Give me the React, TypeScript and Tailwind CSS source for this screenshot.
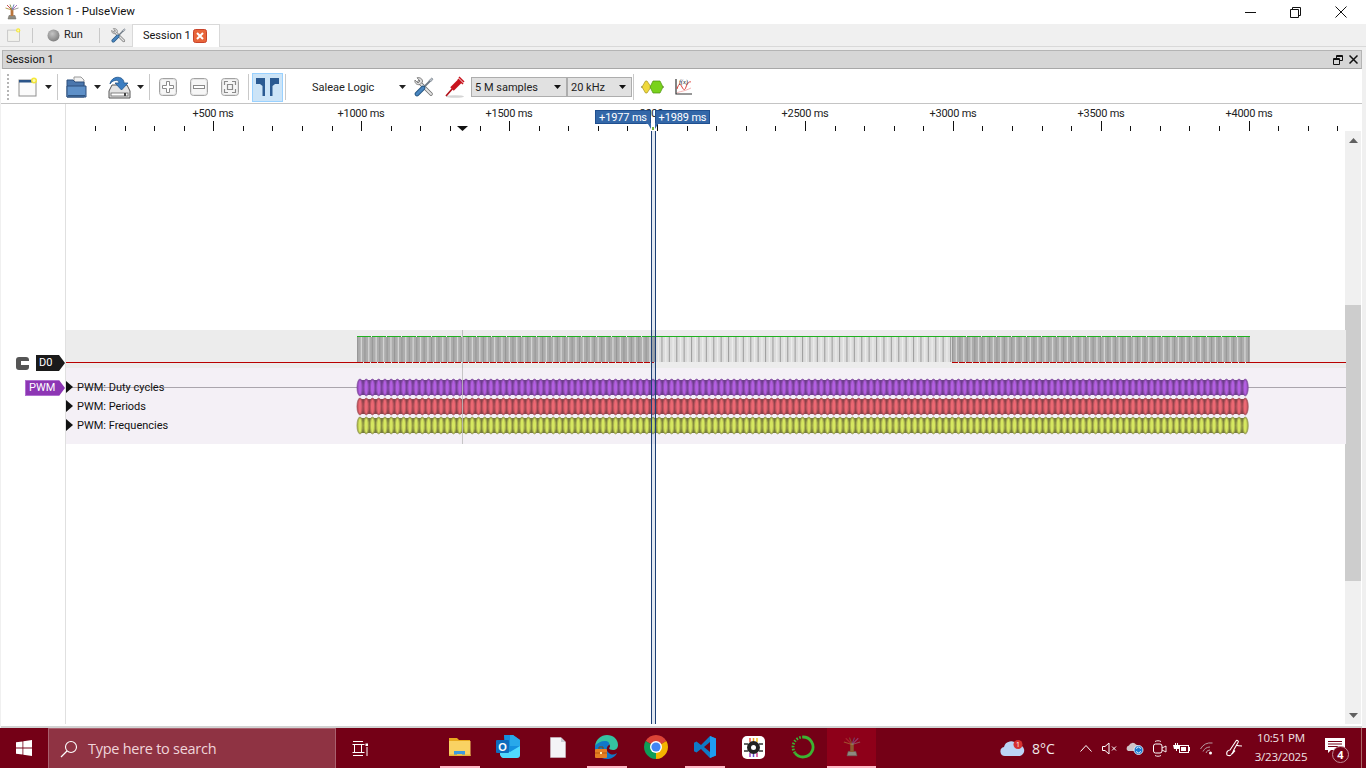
import React from "react";

const Caret = ({ c = "#222", w = 7 }: { c?: string; w?: number }) => (
  <svg width={w} height="4" viewBox="0 0 7 4" className="shrink-0"><path d="M0 0h7L3.5 4z" fill={c} /></svg>
);
const Sep = ({ h = "h-[26px]", ml = "ml-0" }: { h?: string; ml?: string }) => <div className={`w-px bg-[#c9c9c9] shrink-0 ${h} ${ml}`} />;

const Logo = ({ s = 16, dark = false }: { s?: number; dark?: boolean }) => (
  <svg width={s} height={s} viewBox="0 0 16 16" className="shrink-0">
    <path d="M5 11.5h6l1 3.5H4z" fill="#8d8a80" stroke="#66645c" strokeWidth=".5" />
    <rect x="6.6" y="5" width="2.8" height="7" fill={dark ? "#8a5a30" : "#b9743a"} />
    <g strokeWidth=".9" fill="none" opacity={dark ? 0.55 : 1}>
      <path d="M8 6L3 1" stroke="#c03a3a" /><path d="M8 6L6 .5" stroke="#7a8a40" /><path d="M8 6L10 .5" stroke="#5878b0" /><path d="M8 6l5-5" stroke="#a060b0" /><path d="M8 6L1.5 4" stroke="#b09040" /><path d="M8 6l6.5-2" stroke="#909090" />
    </g>
  </svg>
);
const Wrench = ({ s = 20 }: { s?: number }) => (
  <svg width={s} height={s} viewBox="0 0 20 20" className="shrink-0">
    <path d="M5 5l12 12" stroke="#6f6f6f" strokeWidth="3.600" strokeLinecap="round" />
    <path d="M5 5l12 12" stroke="#e4e4e4" strokeWidth="2" strokeLinecap="round" />
    <path d="M3 .8L6 4 4 6 1 3C.3 5.500 2.500 8.500 6 7.500L8.500 5C9 2 6 0 3 .8z" fill="#dcdcdc" stroke="#6f6f6f" strokeWidth=".8" />
    <path d="M9 11l7-7" stroke="#6f7a85" strokeWidth="1.800" />
    <path d="M15 3.500l2.800-2.500 1.200 1.200-2.500 2.800z" fill="#b8c0c8" stroke="#5f6a75" strokeWidth=".6" />
    <path d="M3 17l6-6" stroke="#23547f" strokeWidth="4.600" strokeLinecap="round" />
    <path d="M3 17l6-6" stroke="#4a86c0" strokeWidth="3" strokeLinecap="round" />
  </svg>
);
const SquareBtn = ({ kind }: { kind: "plus" | "minus" | "fit" }) => (
  <svg width="18" height="18" viewBox="0 0 18 18" className="shrink-0">
    <rect x=".5" y=".5" width="17" height="17" rx="3" fill="#ececec" stroke="#a2a2a2" />
    <rect x="1.500" y="1.500" width="15" height="15" rx="2" fill="#f6f6f6" stroke="#dcdcdc" strokeWidth=".6" />
    {kind === "plus" && <path d="M7.500 3.500h3v4h4v3h-4v4h-3v-4h-4v-3h4z" fill="#fff" stroke="#8a8a8a" />}
    {kind === "minus" && <rect x="3.500" y="7.500" width="11" height="3" fill="#fff" stroke="#8a8a8a" />}
    {kind === "fit" && <path d="M3.500 7V3.500H7M11 3.500h3.500V7M14.500 11v3.500H11M7 14.500H3.500V11M6.500 6.500h5v5h-5z" fill="none" stroke="#8a8a8a" strokeWidth="1.200" />}
  </svg>
);
const NewDoc = ({ s = 20, dim = false }: { s?: number; dim?: boolean }) => (
  <svg width={s} height={s} viewBox="0 0 20 20" className="shrink-0">
    <rect x="1" y="3" width="17" height="16" fill={dim ? "#f2f2ee" : "#fbfbfb"} stroke={dim ? "#b9b9b9" : "#8f8f8f"} />
    {!dim && <rect x="1" y="3" width="17" height="2.500" fill="#2a5488" />}
    <circle cx="16" cy="3.500" r="3" fill="#f6e830" opacity=".95" />
    <circle cx="16" cy="3.500" r="1.500" fill="#fffbb0" />
  </svg>
);
const Open = () => (
  <svg width="21" height="22" viewBox="0 0 21 22" className="shrink-0">
    <path d="M8 1h7l3 3v6H8z" fill="#f1f1f1" stroke="#9a9a9a" />
    <path d="M1 4h6l2 2h9v15H1z" fill="#4a76ad" stroke="#2c4f7d" />
    <path d="M1 10h19v11H1z" fill="#5e90c8" stroke="#2c4f7d" />
    <rect x="2" y="19" width="17" height="1.500" fill="#2f5582" />
  </svg>
);
const Save = () => (
  <svg width="23" height="23" viewBox="0 0 23 23" className="shrink-0">
    <path d="M4 9h15l3 6v7H1v-7z" fill="#e4e4e4" stroke="#555" />
    <rect x="3" y="17" width="17" height="3" fill="#fff" stroke="#666" strokeWidth=".8" />
    <rect x="16" y="17" width="2" height="3" fill="#444" />
    <path d="M2 8C3 2 9 0 13 2c2 1 3 3 3 5h4l-6.500 7L7 7h4c0-2-2-3-4-2.500C5 5 3 6 2 8z" fill="#3b7ec2" stroke="#22558c" strokeWidth=".8" />
  </svg>
);
const Probe = () => (
  <svg width="21" height="22" viewBox="0 0 21 22" className="shrink-0">
    <ellipse cx="10" cy="20.500" rx="9" ry="1.300" fill="#d5d5d5" />
    <path d="M1 20L8 12" stroke="#b01018" strokeWidth="1.600" />
    <path d="M7 13L15 5" stroke="#c8141e" strokeWidth="5" />
    <path d="M13 3l5 5M14 1l5 5" stroke="#c8141e" strokeWidth="1.500" />
  </svg>
);
const Decoder = () => (
  <svg width="23" height="14" viewBox="0 0 23 14" className="shrink-0">
    <path d="M0 7h23" stroke="#5a5a40" strokeWidth="1" />
    <path d="M1 7l3.500-6h1.500l4 6-4 6H4.500z" fill="#efd83c" stroke="#a59420" strokeWidth=".7" />
    <path d="M9 7l3-6h7l3 6-3 6h-7z" fill="#79d21c" stroke="#4d9010" strokeWidth=".7" />
  </svg>
);
const MathIcon = () => (
  <svg width="19" height="19" viewBox="0 0 19 19" className="shrink-0">
    <path d="M2 1v15h16" fill="none" stroke="#333" strokeWidth="1.200" />
    <path d="M3 11c2-6 3-6 5-2s3 3 4 0 3-6 5-5" fill="none" stroke="#e0423a" strokeWidth="1" />
    <path d="M3 15c3-2 6-1 14-5" fill="none" stroke="#f0a0a0" strokeWidth=".8" />
    <text x="5" y="6" fontSize="6.500" fontFamily="'Liberation Serif',serif" fontStyle="italic" fill="#111">f(x)</text>
  </svg>
);
const Combo = ({ text, w }: { text: string; w: string }) => (
  <div className={`${w} h-[20px] shrink-0 bg-[#e1e1e1] border border-[#adadad] flex items-center justify-between pl-[3px] pr-[5px] text-[#222]`}>
    <span className="translate-y-[1px]">{text}</span><Caret c="#111" />
  </div>
);

const Ruler = () => {
  const ticks = Array.from({ length: 43 }, (_, i) => i);
  return (
    <svg width="1346" height="27" viewBox="0 0 1346 27" className="block shrink-0">
      <line x1="64.500" y1="0" x2="64.500" y2="27" stroke="#e0e0e0" />
      {ticks.map((i) => {
        const x = Math.round(94 + i * 29.58) + 0.5;
        const major = (i - 4) % 5 === 0;
        const label = 500 + ((i - 4) / 5) * 500;
        return (
          <g key={i}>
            <line x1={x} x2={x} y1={major ? 17 : 22} y2={27} stroke="#111" />
            {major && i >= 4 && (
              <text x={x - 0.5} y="13" textAnchor="middle" fontSize="11" letterSpacing="-0.25" fill="#222" fontFamily="Roboto,sans-serif">{`+${label} ms`}</text>
            )}
          </g>
        );
      })}
      <path d="M456 22h11l-5.500 5z" fill="#111" />
    </svg>
  );
};

const Bars = ({ from, to, base, light, dark, lp }: { from: number; to: number; base: string; light: string; dark: string; lp: number }) => {
  const n = Math.ceil((to - from) / lp);
  return (
    <g>
      <rect x={from} y="337" width={to - from} height="25" fill={base} />
      {Array.from({ length: n }, (_, i) => {
        const x = from + i * lp;
        return (
          <g key={i}>
            {x < to - 1 && <rect x={x} y="337" width="1.100" height="25" fill={dark} />}
            {x + lp * 0.5 < to - 1 && <rect x={x + lp * 0.5} y="337" width="1.300" height="25" fill={light} />}
          </g>
        );
      })}
    </g>
  );
};

const D0Wave = () => (
  <svg width="1280" height="38" viewBox="66 330 1280 38" className="block shrink-0">
    <line x1="65" y1="362.500" x2="357" y2="362.500" stroke="#b80000" />
    <Bars from={357} to={654} base="#adadad" light="#d4d4d4" dark="#979797" lp={7.4} />
    <Bars from={654} to={952} base="#dcdcdc" light="#ececec" dark="#a0a0a0" lp={7.4} />
    <Bars from={952} to={1250} base="#adadad" light="#d4d4d4" dark="#979797" lp={7.4} />
    <line x1="357" y1="336.500" x2="654" y2="336.500" stroke="#1fb11f" strokeDasharray="14 1" />
    <line x1="654" y1="336.500" x2="952" y2="336.500" stroke="#1fb11f" />
    <line x1="952" y1="336.500" x2="1250" y2="336.500" stroke="#1fb11f" strokeDasharray="14 1" />
    <line x1="357" y1="362.500" x2="654" y2="362.500" stroke="#b80000" strokeDasharray="6 1" />
    <line x1="952" y1="362.500" x2="1250" y2="362.500" stroke="#b80000" strokeDasharray="6 1" />
    <line x1="1250" y1="362.500" x2="1346" y2="362.500" stroke="#b80000" />
    <line x1="462.500" y1="330" x2="462.500" y2="368" stroke="#bdbdbd" />
  </svg>
);

const Lane = ({ y, fill, mid, edge }: { y: number; fill: string; mid: string; edge: string }) => {
  const p = 6.234;
  const n = 142;
  return (
    <g>
      <rect x="360" y={y + 1} width="885" height="15" fill={edge} />
      {Array.from({ length: n + 1 }, (_, i) => (
        <g key={i}>
          <ellipse cx={360 + i * p} cy={y + 8.500} rx="3.100" ry="8.500" fill={mid} stroke={edge} strokeWidth=".5" />
          <ellipse cx={360 + i * p} cy={y + 8.500} rx="1.500" ry="7" fill={fill} />
        </g>
      ))}
    </g>
  );
};
const PwmWave = () => (
  <svg width="1280" height="76" viewBox="66 368 1280 76" className="block shrink-0">
    <line x1="65" y1="387.500" x2="357" y2="387.500" stroke="#aaa5ad" />
    <line x1="1248" y1="387.500" x2="1346" y2="387.500" stroke="#aaa5ad" />
    <Lane y={379} fill="#b35fe2" mid="#9150b4" edge="#6f3d8d" />
    <Lane y={398} fill="#ec6873" mid="#c0565f" edge="#8a424a" />
    <Lane y={417} fill="#d6e860" mid="#aeb750" edge="#767c3e" />
    <line x1="462.500" y1="368" x2="462.500" y2="444" stroke="#bdbdbd" strokeOpacity=".85" />
  </svg>
);

const AppSlot = ({ children, on, hi }: { children: React.ReactNode; on?: boolean; hi?: boolean }) => (
  <div className={`w-[49px] h-full flex flex-col items-center shrink-0 ${hi ? "bg-[#8e0019]" : ""}`}>
    <div className="flex-1 flex items-center justify-center">{children}</div>
    <div className={`h-[2px] ${hi ? "w-full" : "w-10"} ${on ? "bg-[#ffb7c4]" : ""}`} />
  </div>
);

const Folder = () => (
  <svg width="22" height="20" viewBox="0 0 22 20">
    <path d="M0 1h8l2 2h11v3H0z" fill="#e8a91f" />
    <path d="M0 4h21.500v15H0z" fill="#f9d263" />
    <path d="M5 19v-5h11v5h-3v-2H8v2z" fill="#3d9be0" />
    <path d="M0 17.500h21.500V19H0z" fill="#eab339" />
  </svg>
);
const Outlook = () => (
  <svg width="25" height="24" viewBox="0 0 25 24">
    <path d="M8 0h9l7 5v14c0 2-1 3-3 3H9z" fill="#1490df" />
    <path d="M14 0h3l7 5v6h-10z" fill="#28a8ea" />
    <path d="M4 12l10 5 10-6v9c0 2-1 3-3 3H7c-1 0-2-1-3-3z" fill="#50d9ff" />
    <rect x="0" y="5" width="13" height="13" rx="1" fill="#0f6cbd" />
    <text x="6.500" y="15.500" textAnchor="middle" fontSize="11" fontWeight="700" fontFamily="'Liberation Sans',sans-serif" fill="#fff">O</text>
  </svg>
);
const FileIcon = () => (
  <svg width="16" height="21" viewBox="0 0 16 21">
    <path d="M.5.500h10.500l4.500 4.500v15.500H.5z" fill="#f3f4f7" stroke="#d0d0d6" strokeWidth=".5" />
    <path d="M11 .5v4.500h4.500z" fill="#c9ccd4" />
  </svg>
);
const EdgeWork = () => (
  <svg width="25" height="24" viewBox="0 0 25 24">
    <path d="M1 11C2 4 7 0 13 0c6 0 11 4 11 10 0 3-2 5-5 5-2 0-4-1-4-2 2-1 1-5-3-5-5 0-8 2-11 3z" fill="#35c1a0" />
    <path d="M1 11c2-3 6-5 10-5 3 0 5 2 4 4-3 2-3 6 0 8 2 2 5 2 8 0-2 4-6 6-10 6C6 24 0 18 1 11z" fill="#1178c8" />
    <rect x="1" y="14" width="12" height="9" rx="1" fill="#e67f22" />
    <path d="M1 18h12" stroke="#b85a10" />
    <path d="M5 14v-2h4v2" stroke="#7a4510" fill="none" />
    <rect x="6" y="17" width="2" height="2" fill="#fff0b0" />
  </svg>
);
const Chrome = () => (
  <svg width="24" height="24" viewBox="0 0 24 24">
    <path d="M12 12L1.610 6A12 12 0 0 1 22.390 6z" fill="#db4437" />
    <path d="M12 12L1.610 6A12 12 0 0 0 12 24z" fill="#0f9d58" />
    <path d="M12 12L22.390 6A12 12 0 0 1 12 24z" fill="#f4b400" />
    <circle cx="12" cy="12" r="6" fill="#fff" />
    <circle cx="12" cy="12" r="4.600" fill="#4285f4" />
  </svg>
);
const VSCode = () => (
  <svg width="24" height="24" viewBox="0 0 24 24">
    <path d="M17 1L8 10 3.500 6.500 1 7.800V16.200L3.500 17.500 8 14l9 9 6-2.500V3.500z" fill="#0f7ac6" />
    <path d="M17 1l6 2.500v17L17 23z" fill="#1f9cf0" />
    <path d="M17 7v10l-6-5z" fill="#740016" />
  </svg>
);
const Chip = () => (
  <svg width="23" height="23" viewBox="0 0 23 23">
    <rect width="23" height="23" rx="5" fill="#fff" />
    <g strokeWidth="1.500">
      <path d="M8 2v4" stroke="#e8503a" /><path d="M11.500 2v4" stroke="#f0a020" /><path d="M15 2v4" stroke="#f0c020" />
      <path d="M8 17v4" stroke="#a040c0" /><path d="M11.500 17v4" stroke="#6050d0" /><path d="M15 17v4" stroke="#d04090" />
      <path d="M2 8h4M17 8h4M2 15h4M17 15h4" stroke="#333" />
    </g>
    <circle cx="11.500" cy="11.500" r="6.500" fill="#222" />
    <circle cx="11.500" cy="11.500" r="2.500" fill="#fff" />
  </svg>
);
const Ring = () => (
  <svg width="24" height="24" viewBox="0 0 24 24">
    <path d="M12 2a10 10 0 1 1-8 16" fill="none" stroke="#3cb432" strokeWidth="2.800" />
    <path d="M4 18A10 10 0 0 1 12 2" fill="none" stroke="#3cb432" strokeWidth="2.800" strokeDasharray="1.600 1.400" />
  </svg>
);

export default function App() {
  return (
    <div className="w-[1366px] h-[768px] overflow-hidden flex flex-col bg-[#f0f0f0] font-['Roboto',sans-serif] text-[11px] text-[#222] whitespace-nowrap">
      {/* title bar */}
      <div className="h-6 shrink-0 bg-white flex items-center pl-[4px] pr-0">
        <Logo s={16} />
        <span className="ml-[3px] text-[11.500px] text-[#111]">Session 1 - PulseView</span>
        <div className="flex-1" />
        <svg width="11" height="11" viewBox="0 0 11 11" className="mr-[34px]"><path d="M0 5.500h11" stroke="#111" /></svg>
        <svg width="11" height="11" viewBox="0 0 11 11" className="mr-[34px]"><path d="M.5 2.500h8v8h-8zM2.500 2.500v-2h8v8h-2" fill="none" stroke="#111" /></svg>
        <svg width="12" height="12" viewBox="0 0 12 12" className="mr-[19px]"><path d="M.5.500l11 11M11.500.500l-11 11" stroke="#111" /></svg>
      </div>
      {/* session tabs toolbar */}
      <div className="h-[23px] shrink-0 bg-[#f0f0f0] flex items-center pl-[7px] border-b border-[#d9d9d9]">
        <NewDoc s={14} dim />
        <Sep h="h-[15px]" ml="ml-[11px]" />
        <svg width="13" height="13" viewBox="0 0 13 13" className="ml-[14px] shrink-0"><defs><radialGradient id="runb" cx=".4" cy=".35" r=".7"><stop offset="0" stopColor="#c4c4c4" /><stop offset="1" stopColor="#7c7c7c" /></radialGradient></defs><circle cx="6.500" cy="6.500" r="6" fill="url(#runb)" /></svg>
        <span className="ml-[4px] text-[#222] w-[35px]">Run</span>
        <Sep h="h-[15px]" />
        <div className="ml-[11px] shrink-0"><Wrench s={15} /></div>
        <div className="ml-[6px] h-[23px] w-[88px] shrink-0 bg-white border border-b-0 border-[#d9d9d9] flex items-center pl-[10px]">
          <span className="text-[#111] w-[46px] translate-y-[1px]">Session 1</span>
          <svg width="14" height="14" viewBox="0 0 14 14" className="ml-[4px] shrink-0">
            <rect x=".5" y=".5" width="13" height="13" rx="2" fill="#e8653a" stroke="#c8432a" />
            <path d="M4 4l6 6M10 4l-6 6" stroke="#fff" strokeWidth="2" />
          </svg>
        </div>
      </div>
      {/* dock */}
      <div className="flex-1 min-h-0 flex flex-col pl-[1px] pr-[4px] pt-[3px]">
        <div className="h-[19px] shrink-0 ml-[1px] mr-0 bg-[#d6d6d6] border border-[#b4b4b4] border-b-[#a8a8a8] flex items-center pl-[3px] pr-[3px] text-[#111]">
          <span className="translate-y-[1px]">Session 1</span>
          <div className="flex-1" />
          <svg width="10" height="10" viewBox="0 0 10 10" className="mr-[6px]"><path d="M.5 3.500h6v6h-6zM3.500 3.500v-3h6v5h-3M.5 4.500h6M3.500 1.500h6" fill="none" stroke="#111" /></svg>
          <svg width="9" height="9" viewBox="0 0 9 9"><path d="M.5.500l8 8M8.500.500l-8 8" stroke="#111" strokeWidth="1.500" /></svg>
        </div>
        <div className="flex-1 min-h-0 bg-white flex flex-col border-b-2 border-[#d2d2d2]">
          {/* main toolbar */}
          <div className="h-[35px] shrink-0 flex items-center border-b border-[#c4c4c4] pl-[6px] pt-[2px]">
            <div className="w-[2px] h-[26px] shrink-0 border-l-2 border-dotted border-[#b5b5b5]" />
            <div className="ml-[9px] shrink-0"><NewDoc /></div>
            <div className="ml-[7px]"><Caret /></div>
            <Sep ml="ml-[5px]" />
            <div className="ml-[8px] shrink-0"><Open /></div>
            <div className="ml-[7px]"><Caret /></div>
            <div className="ml-[7px] shrink-0"><Save /></div>
            <div className="ml-[6px]"><Caret /></div>
            <Sep ml="ml-[5px]" />
            <div className="ml-[9px] flex gap-[13px]">
              <SquareBtn kind="plus" /><SquareBtn kind="minus" /><SquareBtn kind="fit" />
            </div>
            <Sep ml="ml-[9px]" />
            <div className="ml-[3px] w-[31px] h-[29px] shrink-0 bg-[#cce4f7] border border-[#99d1ff] flex items-center justify-center">
              <svg width="23" height="20" viewBox="0 0 23 20">
                <path d="M0 1h9v18H6.500V9L4 7H0zM23 1h-9v18h2.500V9L19 7h4z" fill="#2a5a92" />
              </svg>
            </div>
            <Sep ml="ml-[2px]" />
            <span className="ml-[26px] w-[87px] text-[#222] translate-y-[1px]">Saleae Logic</span>
            <Caret />
            <div className="ml-[8px]"><Wrench /></div>
            <div className="ml-[11px]"><Probe /></div>
            <div className="ml-[5px]"><Combo text="5 M samples" w="w-[96px]" /></div>
            <Combo text="20 kHz" w="w-[65px]" />
            <Sep ml="ml-[1px]" />
            <div className="ml-[7px]"><Decoder /></div>
            <div className="ml-[10px]"><MathIcon /></div>
          </div>
          {/* view */}
          <div className="relative flex-1 min-h-0 flex flex-col pb-[2px]">
            <div className="h-[27px] shrink-0 flex"><Ruler /></div>
            <div className="flex-1 min-h-0 flex">
              <div className="w-[65px] shrink-0 border-r border-[#e0e0e0] flex flex-col items-end pt-[224px]">
                <div className="flex items-center h-[16px]">
                  <div className="w-[13px] h-[13px] bg-[#555] rounded-[3px] flex items-center justify-end shrink-0">
                    <div className="w-[8px] h-[4px] bg-white" />
                  </div>
                  <div className="ml-[7px] h-[16px] w-[29px] flex shrink-0 items-center">
                    <span className="h-full flex-1 bg-[#1a1a1a] text-white leading-[16px] pl-[3px]">D0</span>
                    <svg width="6" height="16" viewBox="0 0 6 16" className="shrink-0"><path d="M0 0l6 8-6 8z" fill="#1a1a1a" /></svg>
                  </div>
                </div>
                <div className="mt-[9px] h-[16px] flex items-center">
                  <span className="h-full w-[34px] bg-[#8d36b4] border border-r-0 border-[#b070d0] text-white leading-[14px] pl-[3px]">PWM</span>
                  <svg width="6" height="16" viewBox="0 0 6 16" className="shrink-0"><path d="M0 0l6 8-6 8z" fill="#8d36b4" /></svg>
                </div>
              </div>
              <div className="relative flex-1 min-w-0 flex flex-col">
                <div className="h-[199px] shrink-0" />
                <div className="h-[38px] shrink-0 bg-[#ececec]"><D0Wave /></div>
                <div className="relative h-[76px] shrink-0 bg-[#f4f0f6]">
                  <PwmWave />
                  <div className="absolute left-0 top-[10px] flex flex-col text-[#111]">
                    {["PWM: Duty cycles", "PWM: Periods", "PWM: Frequencies"].map((t) => (
                      <div key={t} className="h-[19px] flex items-center">
                        <svg width="7" height="12" viewBox="0 0 7 12" className="shrink-0 -translate-y-[1px]"><path d="M0 0l7 6-7 6z" fill="#111" /></svg>
                        <span className="ml-[4px] translate-y-[1px]">{t}</span>
                      </div>
                    ))}
                  </div>
                </div>
              </div>
              <div className="w-[16px] shrink-0 flex flex-col bg-[#f0f0f0] ml-[-1px] mr-[1px]">
                <div className="h-[19px] flex items-center justify-center shrink-0"><svg width="9" height="5" viewBox="0 0 9 5"><path d="M4.500 0L9 5H0z" fill="#606060" /></svg></div>
                <div className="h-[155px] shrink-0" />
                <div className="h-[276px] shrink-0 bg-[#cdcdcd]" />
                <div className="flex-1" />
                <div className="h-[17px] flex items-center justify-center shrink-0"><svg width="9" height="5" viewBox="0 0 9 5"><path d="M4.500 5L9 0H0z" fill="#606060" /></svg></div>
              </div>
            </div>
            {/* cursors overlay */}
            <div className="absolute left-[649.500px] top-[27px] bottom-[2px] w-[5px] border-x-[1.500px] border-[#1d3f75] bg-[#3465a4]/15" />
            <div className="absolute left-[594px] top-[6px] w-[56px] h-[14px] bg-[#3367a8] border border-[#1f4f8f] text-white leading-[13px] text-center tracking-[-0.15px]">+1977 ms</div>
            <div className="absolute left-[654px] top-[6px] w-[55px] h-[14px] bg-[#3367a8] border border-[#1f4f8f] text-white leading-[13px] text-center tracking-[-0.15px]">+1989 ms</div>
            <svg width="14" height="9" viewBox="0 0 14 9" className="absolute left-[645px] top-[19px]">
              <path d="M0 0h5v6L2 1H0zM14 0H9v6l3-5h2z" fill="#3367a8" />
              <path d="M6 4h2v3H6z" fill="#76b53a" />
            </svg>
          </div>
        </div>
      </div>
      {/* taskbar */}
      <div className="h-10 shrink-0 bg-[#740016] flex items-center text-white font-['Open_Sans',sans-serif]">
        <div className="w-[48px] h-full flex items-center justify-center shrink-0">
          <svg width="16" height="16" viewBox="0 0 16 16"><path d="M0 2.300L6.500 1.400V7.600H0zM7.300 1.300L16 0V7.600H7.300zM0 8.400H6.500V14.600L0 13.700zM7.300 8.400H16V16L7.300 14.700z" fill="#fff" /></svg>
        </div>
        <div className="w-[288px] h-full shrink-0 bg-[#8f3343] border border-[#a9606e] border-b-0 flex items-center pl-[11px]">
          <svg width="18" height="18" viewBox="0 0 18 18" className="shrink-0"><circle cx="11" cy="7" r="5.500" fill="none" stroke="#fff" strokeWidth="1.100" /><path d="M7 11l-6 6" stroke="#fff" strokeWidth="1.300" /></svg>
          <span className="ml-[10px] text-[14.500px] text-[#f0d5da] tracking-[-0.27px]">Type here to search</span>
        </div>
        <div className="w-[99px] h-full shrink-0 flex items-center pl-[16px]">
          <svg width="16" height="15" viewBox="0 0 16 15"><path d="M1 .5h10M1 14.500h10M2.500 3.500h7v8h-7zM.5 3.500h12M.5 11.500h12M15 6v9" fill="none" stroke="#fff" /><rect x="13.500" y="2.500" width="2.500" height="2.500" fill="#fff" /></svg>
        </div>
        <div className="h-full flex shrink-0 w-[441px]">
          <AppSlot on><Folder /></AppSlot>
          <AppSlot><Outlook /></AppSlot>
          <AppSlot><FileIcon /></AppSlot>
          <AppSlot on><EdgeWork /></AppSlot>
          <AppSlot><Chrome /></AppSlot>
          <AppSlot on><VSCode /></AppSlot>
          <AppSlot><Chip /></AppSlot>
          <AppSlot><Ring /></AppSlot>
          <AppSlot on hi><Logo s={20} dark /></AppSlot>
        </div>
        <div className="w-[124px] shrink-0" />
        <svg width="25" height="17" viewBox="0 0 25 17" className="shrink-0">
          <path d="M5 16a4.500 4.500 0 0 1-1-8.900A7 7 0 0 1 17 5a5.500 5.500 0 0 1 3 11z" fill="#bcd4f5" />
          <circle cx="18" cy="4.500" r="4.500" fill="#d63030" />
          <text x="18" y="7" textAnchor="middle" fontSize="7" fill="#fff" fontFamily="'Open Sans',sans-serif">1</text>
        </svg>
        <span className="ml-[7px] text-[14px] text-[#f0e8ea] w-[48px] shrink-0">8°C</span>
        <svg width="12" height="7" viewBox="0 0 12 7" className="shrink-0"><path d="M.5 6.500l5.500-6 5.500 6" fill="none" stroke="#fff" /></svg>
        <svg width="15" height="13" viewBox="0 0 15 13" className="ml-[10px] shrink-0"><path d="M.5 4.500h2.500L7 1v11L3 8.500H.5zM10 4.500l4 4M14 4.500l-4 4" fill="none" stroke="#fff" /></svg>
        <svg width="18" height="14" viewBox="0 0 18 14" className="ml-[9px] shrink-0"><path d="M2 10a3 3 0 0 1 1-5.500 4 4 0 0 1 7-1 3.500 3.500 0 0 1 3 3V10z" fill="#d0c4c8" /><circle cx="12.500" cy="9" r="4.500" fill="#1a78d0" stroke="#fff" strokeWidth=".8" /><path d="M10.500 8a2 2 0 0 1 4 0M14.500 10a2 2 0 0 1-4 0" stroke="#fff" fill="none" strokeWidth=".8" /></svg>
        <svg width="14" height="17" viewBox="0 0 14 17" className="ml-[9px] shrink-0"><rect x=".5" y="4" width="8.500" height="9" rx="2" fill="none" stroke="#fff" /><path d="M9 8l4-2v6l-4-2M2 1.500c2-1 4-1 6 0M2 15.500c2 1 4 1 6 0" fill="none" stroke="#fff" strokeWidth=".9" /></svg>
        <svg width="17" height="11" viewBox="0 0 17 11" className="ml-[6px] shrink-0"><path d="M0 2h2V0h1v2h1V0h1v2h1v4H4v2H3V6H1z" fill="#fff" /><rect x="6.500" y="2.500" width="9" height="7" fill="none" stroke="#fff" /><rect x="8" y="4" width="5" height="4" fill="#fff" /><path d="M16.500 4v4" stroke="#fff" /></svg>
        <svg width="14" height="13" viewBox="0 0 14 13" className="ml-[10px] shrink-0"><path d="M.5 7a12 12 0 0 1 12-6M3 9.500A8 8 0 0 1 10 5M6 11a4 4 0 0 1 4-3" fill="none" stroke="#b89aa2" /><circle cx="10.500" cy="11" r="1.500" fill="#fff" /></svg>
        <svg width="17" height="18" viewBox="0 0 17 18" className="ml-[12px] shrink-0"><path d="M1 16c-1-3 1-5 3-5l6-9c1-1.500 3 0 2 1.500l-4 7c-1 2-1 4-3 5 2-1 3-3 4-4M10 6c2 1 5 1 6 1M1 16c2 1 3 1 4 0" fill="none" stroke="#fff" strokeWidth="1.100" /></svg>
        <div className="ml-[4px] w-[68px] shrink-0 flex flex-col items-center text-[11.500px] tracking-[-0.2px] leading-[19px] text-[#f0e4e6] pb-[2px]">
          <span>10:51 PM</span>
          <span>3/23/2025</span>
        </div>
        <div className="ml-[4px] w-[32px] h-full shrink-0 relative flex items-center justify-center">
          <svg width="20" height="15" viewBox="0 0 20 15" className="-translate-y-[3px]"><path d="M0 0h20v12H6l-3 3v-3H0z" fill="#fff" /><path d="M3 3.500h14M3 6h14M3 8.500h10" stroke="#740016" /></svg>
          <span className="absolute left-[13px] top-[18px] w-[17px] h-[17px] rounded-full bg-[#740016] border border-[#c08a95] text-[11px] leading-[15px] font-bold text-center">4</span>
        </div>
        <div className="flex-1 h-full flex justify-end pr-[4px]"><div className="w-px h-full bg-[#a66]" /></div>
      </div>
    </div>
  );
}
